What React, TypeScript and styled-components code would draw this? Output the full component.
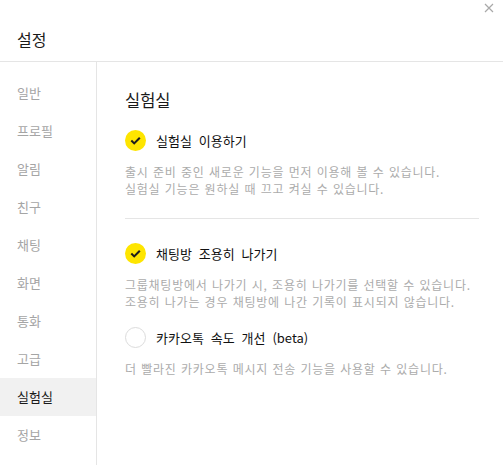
import styled, { createGlobalStyle } from 'styled-components';

const menu = ['일반', '프로필', '알림', '친구', '채팅', '화면', '통화', '고급', '실험실', '정보'];

const options = [
  {
    label: '실험실 이용하기',
    checked: true,
    desc: ['출시 준비 중인 새로운 기능을 먼저 이용해 볼 수 있습니다.', '실험실 기능은 원하실 때 끄고 켜실 수 있습니다.'],
  },
  {
    label: '채팅방 조용히 나가기',
    checked: true,
    desc: ['그룹채팅방에서 나가기 시, 조용히 나가기를 선택할 수 있습니다.', '조용히 나가는 경우 채팅방에 나간 기록이 표시되지 않습니다.'],
  },
  {
    label: '카카오톡 속도 개선 (beta)',
    checked: false,
    desc: ['더 빨라진 카카오톡 메시지 전송 기능을 사용할 수 있습니다.'],
  },
];

const CheckIcon = () => (
  <svg width="21" height="21" viewBox="0 0 21 21">
    <path d="M6.3 10.6 L9.2 13.4 L14.8 7.8" fill="none" stroke="#1c1c1c" strokeWidth="2.1" />
  </svg>
);

const CloseIcon = () => (
  <svg width="10" height="10" viewBox="0 0 10 10">
    <path d="M1 1 L9 9 M9 1 L1 9" stroke="#a9a9a9" strokeWidth="1.2" />
  </svg>
);

type OptionData = (typeof options)[number];

const OptionBlock = ({ option }: { option: OptionData }) => (
  <Option>
    <OptionRow>
      <Circle checked={option.checked}>{option.checked && <CheckIcon />}</Circle>
      <Label>{option.label}</Label>
    </OptionRow>
    <Desc>
      {option.desc.map((d) => (
        <DescLine key={d}>{d}</DescLine>
      ))}
    </Desc>
  </Option>
);

const App = () => {
  const [first, ...rest] = options;
  return (
    <>
      <GlobalStyle />
      <Window>
        <Header>
          <CloseRow>
            <CloseIcon />
          </CloseRow>
          <Title>설정</Title>
        </Header>
        <Body>
          <Sidebar>
            {menu.map((m) => (
              <MenuItem key={m} active={m === '실험실'}>
                {m}
              </MenuItem>
            ))}
          </Sidebar>
          <Content>
            <Heading>실험실</Heading>
            <OptionBlock option={first} />
            <Divider />
            {rest.map((o) => (
              <OptionBlock key={o.label} option={o} />
            ))}
          </Content>
        </Body>
      </Window>
    </>
  );
};

export default App;

const GlobalStyle = createGlobalStyle`
  html, body {
    margin: 0;
    padding: 0;
    background: #fff;
  }
  body {
    font-family: "Noto Sans CJK KR", "Noto Sans", sans-serif;
  }
`;

const Window = styled.div`
  width: 100vw;
  height: 100vh;
  display: flex;
  flex-direction: column;
  background: #fff;
  overflow: hidden;
`;

const Header = styled.header`
  height: 62px;
  box-sizing: border-box;
  border-bottom: 1px solid #e5e5e5;
  padding: 3px 9px 0 17px;
  display: flex;
  flex-direction: column;
`;

const CloseRow = styled.div`
  display: flex;
  justify-content: flex-end;
  height: 10px;
`;

const Title = styled.h1`
  margin: 16px 0 0 0;
  font-size: 16px;
  line-height: 20px;
  font-weight: 400;
  color: #1a1a1a;
`;

const Body = styled.div`
  flex: 1;
  display: flex;
`;

const Sidebar = styled.nav`
  width: 97px;
  box-sizing: border-box;
  border-right: 1px solid #e5e5e5;
  padding-top: 12px;
  display: flex;
  flex-direction: column;
`;

const MenuItem = styled.div<{ active?: boolean }>`
  height: 38px;
  display: flex;
  align-items: center;
  padding-left: 17px;
  padding-bottom: 1px;
  box-sizing: border-box;
  font-size: 13px;
  color: ${({ active }) => (active ? '#1a1a1a' : '#a5a5a5')};
  background: ${({ active }) => (active ? '#f1f1f1' : 'transparent')};
`;

const Content = styled.main`
  flex: 1;
  padding: 28px 24px 0 28px;
  display: flex;
  flex-direction: column;
`;

const Heading = styled.h2`
  margin: 0 0 20px 0;
  font-size: 16.5px;
  line-height: 20px;
  font-weight: 400;
  color: #1a1a1a;
`;

const Option = styled.div`
  display: flex;
  flex-direction: column;
  & + & {
    margin-top: 17px;
  }
`;

const OptionRow = styled.div`
  display: flex;
  align-items: center;
  gap: 10px;
  height: 21px;
`;

const Circle = styled.span<{ checked?: boolean }>`
  width: 21px;
  height: 21px;
  box-sizing: border-box;
  border-radius: 50%;
  flex-shrink: 0;
  display: flex;
  background: ${({ checked }) => (checked ? '#fee500' : '#fff')};
  border: ${({ checked }) => (checked ? 'none' : '1px solid #dcdcdc')};
`;

const Label = styled.span`
  font-size: 13px;
  word-spacing: 4px;
  color: #111;
`;

const Desc = styled.div`
  margin-top: 12px;
  display: flex;
  flex-direction: column;
`;

const DescLine = styled.div`
  font-size: 12px;
  line-height: 17px;
  letter-spacing: 0.75px;
  word-spacing: 1px;
  color: #ababab;
`;

const Divider = styled.hr`
  margin: 21px 0 24px 0;
  border: none;
  border-top: 1px solid #e5e5e5;
  height: 0;
`;
